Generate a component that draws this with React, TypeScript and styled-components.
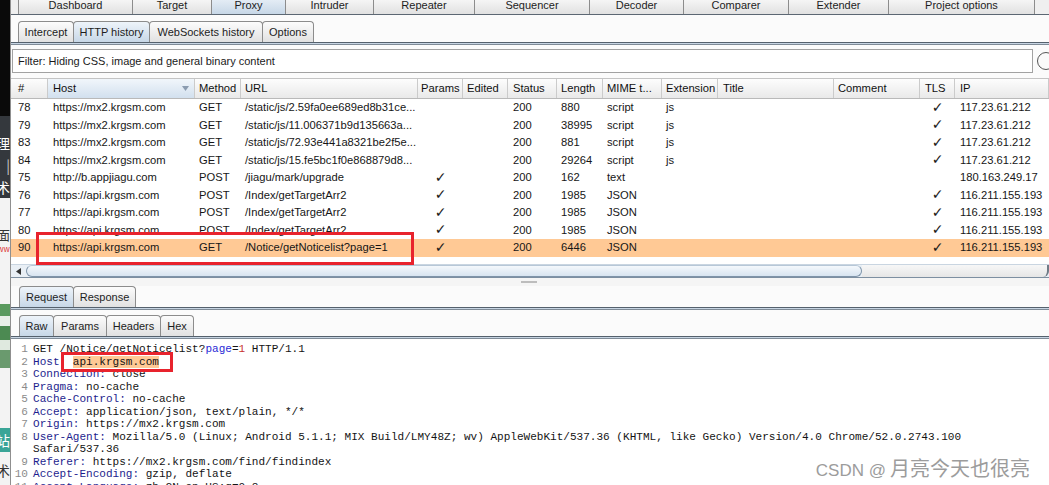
import React from 'react';
import styled, { createGlobalStyle } from 'styled-components';

const Global = createGlobalStyle`
  html, body { margin: 0; padding: 0; background: #f4f4f4; }
  body { width: 1049px; height: 485px; overflow: hidden; font-family: "Liberation Sans", Arial, sans-serif; }
  #root { width: 1049px; height: 485px; }
`;

const Screen = styled.div`
  position: relative;
  display: flex;
  width: 1049px;
  height: 485px;
  overflow: hidden;
`;

/* ---------- desktop strip at the left edge ---------- */
const LeftStrip = styled.div`
  width: 10px;
  flex: none;
  display: flex;
  flex-direction: column;
  overflow: hidden;
`;
const StripBlock = styled.div<{ $h: number; $bg: string; $fg?: string; $size?: number }>`
  flex: none;
  height: ${p => p.$h}px;
  background: ${p => p.$bg};
  color: ${p => p.$fg || '#fff'};
  font-family: "Noto Sans CJK SC", sans-serif;
  font-size: ${p => p.$size || 13}px;
  line-height: ${p => p.$h}px;
  display: flex;
  justify-content: flex-end;
  overflow: hidden;
  white-space: nowrap;
`;

/* ---------- burp window ---------- */
const Window = styled.div`
  flex: 1;
  min-width: 0;
  display: flex;
  flex-direction: column;
  border-left: 1px solid #8f8f8f;
  background: #f6f6f6;
`;

const TabBar = styled.div<{ $h: number; $pl: number; $mt?: number }>`
  flex: none;
  display: flex;
  align-items: flex-end;
  height: ${p => p.$h}px;
  margin-top: ${p => p.$mt || 0}px;
  padding-left: ${p => p.$pl}px;
  overflow: hidden;
`;

const TopTabBar = styled(TabBar)`
  border-bottom: 1px solid #5c6773;
  box-shadow: 0 1px 0 #cdd9e5;
  background: #efefef;
`;

const Tab = styled.div<{ $w: number; $h: number; $active?: boolean }>`
  flex: none;
  box-sizing: border-box;
  width: ${p => p.$w}px;
  height: ${p => p.$h}px;
  margin-right: -1px;
  border: 1px solid #8c8c8c;
  border-bottom: none;
  border-radius: 4px 4px 0 0;
  background: ${p => (p.$active ? 'linear-gradient(#eef4fa, #c7d7e7)' : 'linear-gradient(#fcfcfc, #e1e1e1)')};
  display: flex;
  align-items: center;
  justify-content: center;
  font-size: 11px;
  color: #1d1d1d;
  white-space: nowrap;
`;

const Rule = styled.div`
  flex: none;
  height: 3px;
  box-sizing: border-box;
  border-top: 1px solid #55616d;
  border-bottom: 1px solid #7f8b97;
  background: #c7d5e3;
`;

const UpperArea = styled.div`
  background: #fbfbfb;
  display: flex;
  flex-direction: column;
`;

const FilterRow = styled.div`
  flex: none;
  display: flex;
  align-items: center;
  gap: 4px;
  height: 24px;
  margin-top: 4px;
  padding-left: 1px;
  overflow: hidden;
`;
const FilterBox = styled.div`
  flex: none;
  width: 1021px;
  height: 24px;
  box-sizing: border-box;
  border: 1px solid #a2a2a2;
  background: #fff;
  padding-left: 5px;
  display: flex;
  align-items: center;
  font-size: 11px;
  color: #1a1a1a;
`;
const HelpRing = styled.div`
  flex: none;
  width: 18px;
  height: 18px;
  box-sizing: border-box;
  border: 1px solid #555;
  border-radius: 50%;
  background: #fafafa;
`;

/* ---------- table ---------- */
const gridCols = '37px 147px 46px 177px 45px 45px 49px 46px 59px 56px 116px 86px 35px 1fr';

const Table = styled.div`
  flex: none;
  margin-top: 5px;
  display: flex;
  flex-direction: column;
`;
const HeaderRow = styled.div`
  display: grid;
  grid-template-columns: ${gridCols};
  height: 21px;
  box-sizing: border-box;
  border-top: 1px solid #c4c4c4;
  border-bottom: 1px solid #b9b9b9;
  background: linear-gradient(#fdfdfd, #e9e9e9);
`;
const HeadCell = styled.div<{ $pad: number; $sorted?: boolean }>`
  position: relative;
  display: flex;
  align-items: center;
  padding-left: ${p => p.$pad}px;
  padding-bottom: 1px;
  border-right: 1px solid #cbcbcb;
  background: ${p => (p.$sorted ? 'linear-gradient(#f1f6fb, #d2e0ee)' : 'transparent')};
  font-size: 11.2px;
  color: #111;
  white-space: nowrap;
  overflow: hidden;
`;
const SortArrow = styled.svg`
  position: absolute;
  right: 5px;
  top: 7px;
`;
const Body = styled.div`
  height: 165px;
  background: #fff;
  display: flex;
  flex-direction: column;
`;
const Row = styled.div<{ $sel?: boolean }>`
  position: relative;
  flex: none;
  display: grid;
  grid-template-columns: ${gridCols};
  height: 17.5px;
  align-items: center;
  background: ${p => (p.$sel ? '#ffc995' : '#fff')};
`;
const Cell = styled.div<{ $pad: number; $center?: boolean }>`
  padding-left: ${p => (p.$center ? 0 : p.$pad)}px;
  text-align: ${p => (p.$center ? 'center' : 'left')};
  font-size: 11.2px;
  line-height: 17px;
  color: #161616;
  white-space: nowrap;
  overflow: hidden;
`;
const Check = styled.span`
  font-family: "DejaVu Sans", sans-serif;
  font-size: 14px;
  color: #1a1a1a;
`;
const RedBox = styled.div<{ $l: number; $t: number; $w: number; $h: number }>`
  position: absolute;
  left: ${p => p.$l}px;
  top: ${p => p.$t}px;
  width: ${p => p.$w}px;
  height: ${p => p.$h}px;
  box-sizing: border-box;
  border: 3px solid #e8232d;
  z-index: 3;
  pointer-events: none;
`;

/* ---------- scrollbar ---------- */
const HScroll = styled.div`
  flex: none;
  display: flex;
  height: 14px;
  box-sizing: border-box;
  border-top: 1px solid #c9d5e1;
  border-bottom: 1px solid #7d8fa1;
  background: #e9eff5;
`;
const ArrowBtn = styled.div`
  flex: none;
  width: 15px;
  display: flex;
  align-items: center;
  justify-content: center;
`;
const Thumb = styled.div`
  flex: none;
  width: 836px;
  box-sizing: border-box;
  border: 1px solid #7f94a9;
  border-top-color: #b7c7d7;
  border-radius: 7px;
  background: linear-gradient(#f4f8fc, #d8e4f0);
`;
const Track = styled.div`
  flex: 1;
  background: linear-gradient(#f7f7f7, #e6e6e6);
  border-right: 2px solid #6f7b87;
  border-radius: 0 0 6px 0;
`;

const Splitter = styled.div`
  flex: none;
  height: 8px;
  display: flex;
  align-items: center;
  justify-content: center;
  background: #f5f5f5;
`;
const Grip = styled.div`
  width: 16px;
  height: 2px;
  background: #bdbdbd;
  margin-right: 2px;
`;

const LowerArea = styled.div`
  flex: 1;
  display: flex;
  flex-direction: column;
  background: #fbfbfb;
  min-height: 0;
`;

/* ---------- editor ---------- */
const Editor = styled.div`
  flex: 1;
  background: #fff;
  padding-top: 4px;
  font-family: "Liberation Mono", "Courier New", monospace;
  font-size: 11.05px;
  line-height: 12.5px;
  color: #141414;
  overflow: hidden;
`;
const Line = styled.div`
  display: flex;
  height: 12.5px;
  white-space: pre;
`;
const Gutter = styled.span`
  flex: none;
  width: 22px;
  box-sizing: border-box;
  padding-right: 5px;
  text-align: right;
  color: #8b8b8b;
`;
const Key = styled.span`
  color: #1e1e8e;
`;
const Param = styled.span`
  color: #2a2ad6;
`;
const Num = styled.span`
  color: #c8322e;
`;
const Hl = styled.span`
  position: relative;
  background: #ffc995;
`;

const Watermark = styled.div`
  position: absolute;
  right: 19px;
  top: 453px;
  font-family: "Noto Sans CJK SC", "Liberation Sans", sans-serif;
  font-size: 20px;
  color: #9c9c9c;
  white-space: nowrap;
  display: flex;
  align-items: baseline;
  gap: 4px;
`;
const WmLatin = styled.span`
  font-family: "Liberation Sans", sans-serif;
  font-size: 17px;
`;

/* ---------- data ---------- */
const topTabs: [string, number, boolean?][] = [
  ['Dashboard', 115],
  ['Target', 80],
  ['Proxy', 75, true],
  ['Intruder', 89],
  ['Repeater', 102],
  ['Sequencer', 116],
  ['Decoder', 95],
  ['Comparer', 106],
  ['Extender', 101],
  ['Project options', 147],
];
const subTabs: [string, number, boolean?][] = [
  ['Intercept', 56],
  ['HTTP history', 77, true],
  ['WebSockets history', 114],
  ['Options', 52],
];
const reqTabs: [string, number, boolean?][] = [
  ['Request', 55, true],
  ['Response', 63],
];
const rawTabs: [string, number, boolean?][] = [
  ['Raw', 35, true],
  ['Params', 54],
  ['Headers', 55],
  ['Hex', 34],
];

type Col = { title: string; pad: number; center?: boolean };
const cols: Col[] = [
  { title: '#', pad: 7 },
  { title: 'Host', pad: 5 },
  { title: 'Method', pad: 4 },
  { title: 'URL', pad: 4 },
  { title: 'Params', pad: 3, center: true },
  { title: 'Edited', pad: 4 },
  { title: 'Status', pad: 5 },
  { title: 'Length', pad: 4 },
  { title: 'MIME t...', pad: 4 },
  { title: 'Extension', pad: 4 },
  { title: 'Title', pad: 5 },
  { title: 'Comment', pad: 4 },
  { title: 'TLS', pad: 5, center: true },
  { title: 'IP', pad: 5 },
];

const C = '✓';
const rows: string[][] = [
  ['78', 'https://mx2.krgsm.com', 'GET', '/static/js/2.59fa0ee689ed8b31ce...', '', '', '200', '880', 'script', 'js', '', '', C, '117.23.61.212'],
  ['79', 'https://mx2.krgsm.com', 'GET', '/static/js/11.006371b9d135663a...', '', '', '200', '38995', 'script', 'js', '', '', C, '117.23.61.212'],
  ['83', 'https://mx2.krgsm.com', 'GET', '/static/js/72.93e441a8321be2f5e...', '', '', '200', '881', 'script', 'js', '', '', C, '117.23.61.212'],
  ['84', 'https://mx2.krgsm.com', 'GET', '/static/js/15.fe5bc1f0e868879d8...', '', '', '200', '29264', 'script', 'js', '', '', C, '117.23.61.212'],
  ['75', 'http://b.appjiagu.com', 'POST', '/jiagu/mark/upgrade', C, '', '200', '162', 'text', '', '', '', '', '180.163.249.17'],
  ['76', 'https://api.krgsm.com', 'POST', '/Index/getTargetArr2', C, '', '200', '1985', 'JSON', '', '', '', C, '116.211.155.193'],
  ['77', 'https://api.krgsm.com', 'POST', '/Index/getTargetArr2', C, '', '200', '1985', 'JSON', '', '', '', C, '116.211.155.193'],
  ['80', 'https://api.krgsm.com', 'POST', '/Index/getTargetArr2', C, '', '200', '1985', 'JSON', '', '', '', C, '116.211.155.193'],
  ['90', 'https://api.krgsm.com', 'GET', '/Notice/getNoticelist?page=1', C, '', '200', '6446', 'JSON', '', '', '', C, '116.211.155.193'],
];

const headerLines: [string, string][] = [
  ['Connection:', ' close'],
  ['Pragma:', ' no-cache'],
  ['Cache-Control:', ' no-cache'],
  ['Accept:', ' application/json, text/plain, */*'],
  ['Origin:', ' https://mx2.krgsm.com'],
];

function Tabs({ items, h }: { items: [string, number, boolean?][]; h: number }) {
  return (
    <>
      {items.map(([label, w, active]) => (
        <Tab key={label} $w={w} $h={h} $active={active}>
          {label}
        </Tab>
      ))}
    </>
  );
}

export default function App() {
  return (
    <>
      <Global />
      <Screen>
        <LeftStrip>
          <StripBlock $h={116} $bg="#0a0a0a" />
          <StripBlock $h={16} $bg="#34383d" />
          <StripBlock $h={22} $bg="#34383d" $size={14}>
            理
          </StripBlock>
          <StripBlock $h={22} $bg="#34383d" $fg="#cfcfcf" $size={14}>
            |
          </StripBlock>
          <StripBlock $h={22} $bg="#34383d" $size={14}>
            术
          </StripBlock>
          <StripBlock $h={28} $bg="#f3f3f3" />
          <StripBlock $h={18} $bg="#f3f3f3" $fg="#333" $size={13}>
            面
          </StripBlock>
          <StripBlock $h={10} $bg="#f3f3f3" $fg="#d33" $size={8}>
            ww
          </StripBlock>
          <StripBlock $h={50} $bg="#f3f3f3" />
          <StripBlock $h={12} $bg="#5a9a5e" />
          <StripBlock $h={10} $bg="#e8efe8" />
          <StripBlock $h={14} $bg="#4c8a52" />
          <StripBlock $h={10} $bg="#dfe9df" />
          <StripBlock $h={18} $bg="#6a9a6e" />
          <StripBlock $h={60} $bg="#f3f3f3" />
          <StripBlock $h={24} $bg="#3aa597" $size={14}>
            站
          </StripBlock>
          <StripBlock $h={37} $bg="#f3f3f3" $fg="#333" $size={14}>
            术
          </StripBlock>
        </LeftStrip>

        <Window>
          <TopTabBar $h={14} $pl={7}>
            <Tabs items={topTabs} h={20} />
          </TopTabBar>

          <UpperArea>
            <TabBar $h={21} $pl={7} $mt={6}>
              <Tabs items={subTabs} h={21} />
            </TabBar>
            <Rule />

            <FilterRow>
              <FilterBox>Filter: Hiding CSS, image and general binary content</FilterBox>
              <HelpRing />
            </FilterRow>

            <Table>
              <HeaderRow>
                {cols.map((c, i) => (
                  <HeadCell key={c.title} $pad={c.pad} $sorted={i === 1}>
                    {c.title}
                    {i === 1 && (
                      <SortArrow width="7" height="5" viewBox="0 0 7 5">
                        <path d="M0 0 H7 L3.5 5 Z" fill="#8b9cb0" />
                      </SortArrow>
                    )}
                  </HeadCell>
                ))}
              </HeaderRow>
              <Body>
                {rows.map((r, ri) => {
                  const sel = ri === rows.length - 1;
                  return (
                    <Row key={r[0]} $sel={sel}>
                      {r.map((v, ci) => (
                        <Cell key={ci} $pad={cols[ci].pad} $center={cols[ci].center}>
                          {v === C ? <Check>{C}</Check> : v}
                        </Cell>
                      ))}
                      {sel && <RedBox $l={25} $t={-7} $w={378} $h={33} />}
                    </Row>
                  );
                })}
              </Body>
              <HScroll>
                <ArrowBtn>
                  <svg width="5" height="7" viewBox="0 0 5 7">
                    <path d="M5 0 V7 L0 3.5 Z" fill="#333" />
                  </svg>
                </ArrowBtn>
                <Thumb />
                <Track />
              </HScroll>
            </Table>
          </UpperArea>

          <Splitter>
            <Grip />
          </Splitter>

          <LowerArea>
            <TabBar $h={21} $pl={8} $mt={0}>
              <Tabs items={reqTabs} h={21} />
            </TabBar>
            <Rule />
            <TabBar $h={21} $pl={8} $mt={5}>
              <Tabs items={rawTabs} h={21} />
            </TabBar>
            <Rule />
            <Editor>
              <Line>
                <Gutter>1</Gutter>
                <span>
                  GET /Notice/getNoticelist?<Param>page</Param>=<Num>1</Num> HTTP/1.1
                </span>
              </Line>
              <Line>
                <Gutter>2</Gutter>
                <span>
                  <Key>Host:</Key>{' '}
                  <Hl>
                    api.krgsm.com
                    <RedBox $l={-12} $t={-4} $w={112} $h={20} />
                  </Hl>
                </span>
              </Line>
              {headerLines.map(([k, v], i) => (
                <Line key={k}>
                  <Gutter>{i + 3}</Gutter>
                  <span>
                    <Key>{k}</Key>
                    {v}
                  </span>
                </Line>
              ))}
              <Line>
                <Gutter>8</Gutter>
                <span>
                  <Key>User-Agent:</Key> Mozilla/5.0 (Linux; Android 5.1.1; MIX Build/LMY48Z; wv) AppleWebKit/537.36
                  (KHTML, like Gecko) Version/4.0 Chrome/52.0.2743.100
                </span>
              </Line>
              <Line>
                <Gutter />
                <span>Safari/537.36</span>
              </Line>
              <Line>
                <Gutter>9</Gutter>
                <span>
                  <Key>Referer:</Key> https://mx2.krgsm.com/find/findindex
                </span>
              </Line>
              <Line>
                <Gutter>10</Gutter>
                <span>
                  <Key>Accept-Encoding:</Key> gzip, deflate
                </span>
              </Line>
              <Line>
                <Gutter>11</Gutter>
                <span>
                  <Key>Accept-Language:</Key> zh-CN,en-US;q=0.8
                </span>
              </Line>
            </Editor>
          </LowerArea>
        </Window>

        <Watermark>
          <WmLatin>CSDN @</WmLatin>
          <span>月亮今天也很亮</span>
        </Watermark>
      </Screen>
    </>
  );
}
